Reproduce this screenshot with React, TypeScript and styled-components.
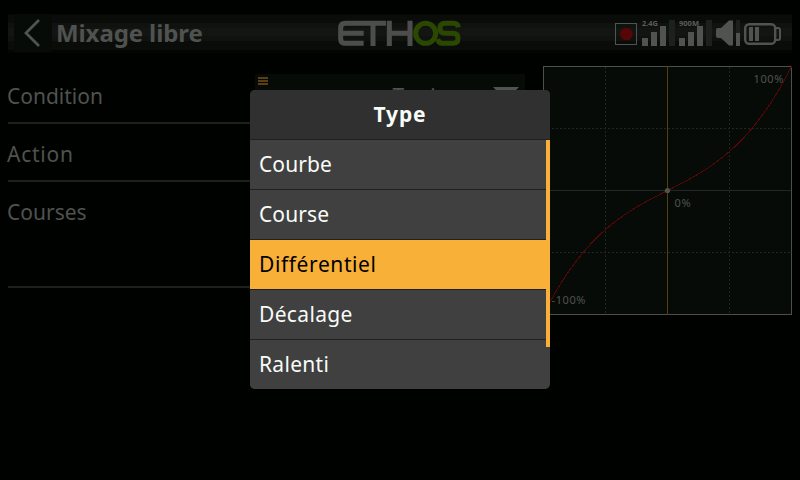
import React from "react";
import styled, { createGlobalStyle } from "styled-components";

const Global = createGlobalStyle`
  * { box-sizing: border-box; }
  html, body { margin: 0; background: #000200; }
  body { width: 800px; height: 480px; overflow: hidden; }
`;

const Screen = styled.main`
  position: relative;
  width: 800px;
  height: 480px;
  padding: 14px 8px 0;
  background: #000200;
  color: #4f524f;
  font: 21px/30px "Noto Sans", "Open Sans", sans-serif;
`;

const Header = styled.header`
  display: grid;
  grid-template-columns: 330px 124px 1fr;
  height: 39px;
  background: linear-gradient(#050705 0 1px, #0a0c0a 1px 9px, #101210 9px 14px, #131513 14px 22px, #101210 22px 27px, #0a0c0a 27px 36px, #030503 36px);
`;

const TitleGroup = styled.div`
  display: flex;
  align-items: center;
  padding-left: 6px;
`;

const BackButton = styled.button`
  width: 38px;
  height: 38px;
  margin-top: -1px;
  padding: 0;
  border: 0;
  background: #070b08;
`;

const Title = styled.h1`
  margin: -2px 0 0 4px;
  font-size: 24px;
  line-height: 38px;
  font-weight: 700;
  letter-spacing: -0.1px;
  white-space: nowrap;
`;

const Status = styled.div`
  display: flex;
  align-items: flex-start;
  justify-content: flex-end;
  padding: 6px 10px 0 0;
`;

const Icon = styled.svg<{ $left?: number; $top?: number }>`
  display: block;
  flex: none;
  overflow: visible;
  margin-left: ${(p) => p.$left ?? 0}px;
  margin-top: ${(p) => p.$top ?? 0}px;
`;

const SignalLabel = styled.text`
  font: 700 7.5px "Noto Sans", sans-serif;
  fill: #5a5e5a;
`;

const Content = styled.div`
  display: grid;
  grid-template-columns: 517px 249px;
  column-gap: 18px;
  padding-top: 13px;
`;

const Form = styled.div`
  display: flex;
  flex-direction: column;
`;

const Row = styled.div<{ $h: number }>`
  display: grid;
  grid-template-columns: 247px 270px;
  height: ${(p) => p.$h}px;
  border-bottom: 2px solid #1d211e;
`;

const Label = styled.span<{ $ls: number }>`
  padding-top: 15px;
  margin-left: -1px;
  letter-spacing: ${(p) => p.$ls}px;
`;

const Select = styled.div`
  display: grid;
  grid-template-columns: 14px 1fr 34px;
  align-items: start;
  height: 43px;
  margin-top: 8px;
  padding: 3px 3px 0;
  background: #070b08;
`;

const SelectValue = styled.span`
  padding-top: 4px;
  text-align: right;
  letter-spacing: 0.6px;
  padding-right: 5px;
`;

const ChartText = styled.text`
  font: 11px "Noto Sans", sans-serif;
  letter-spacing: 0.6px;
  fill: #4f524f;
`;

const Dialog = styled.section`
  position: absolute;
  left: 250px;
  top: 90px;
  width: 300px;
  height: 299px;
  border-radius: 5px;
  overflow: hidden;
  background: #404040;
`;

const DialogTitle = styled.h2`
  height: 50px;
  margin: 0;
  border-bottom: 1px solid #1f2120;
  background: #303030;
  color: #f8fcf8;
  font-size: 21px;
  line-height: 49px;
  font-weight: 700;
  letter-spacing: 0.9px;
  text-align: center;
`;

const List = styled.div`
  display: grid;
  grid-template-columns: 296px 4px;
`;

const Option = styled.div<{ $active?: boolean; $ls: number }>`
  height: 50px;
  padding-left: 9px;
  line-height: 49px;
  letter-spacing: ${(p) => p.$ls}px;
  border-bottom: 1px solid #1f2120;
  background: ${(p) => (p.$active ? "#f8b038" : "#404040")};
  color: ${(p) => (p.$active ? "#000200" : "#f8fcf8")};

  &:last-child { border-bottom-color: #404040; }
`;

const ScrollThumb = styled.div`
  height: 207px;
  background: #f8b038;
`;

const DIM = "#505450";
const FAINT = "#1d211e";

function Signal({ label, left, width }: { label: string; left: number; width: number }) {
  return (
    <Icon $left={left} width="33" height="26" viewBox="0 0 33 26" shapeRendering="crispEdges">
      <path d="M0 18h6v8H0zM9 12h6v14H9zM18 6h6v20h-6z" fill={DIM} />
      <path d="M27 0h6v26h-6z" fill={FAINT} />
      <SignalLabel x="0" y="6" textLength={width} lengthAdjust="spacingAndGlyphs">{label}</SignalLabel>
    </Icon>
  );
}

function Logo() {
  return (
    <Icon $top={6} width="124" height="27" viewBox="54 45 372 81" fill="none" strokeWidth="15" stroke="#4d4d4d">
      <path d="M131 55H76Q62 55 62 69V101Q62 115 76 115H131M64 85H131M128 55H198M159 55V123M208 47V123M270 47V123M208 85H270" />
      <g stroke="#2b4800">
        <circle cx="317" cy="85" r="30" />
        <path d="M415 67Q413 55 401 55H375Q360 55 360 70Q360 85 375 85H399Q414 85 414 100Q414 115 399 115H368Q355 115 353 102" />
      </g>
    </Icon>
  );
}

function StatusIcons() {
  return (
    <Status>
      <Icon $top={3} width="22" height="22" viewBox="0 0 22 22">
        <rect x=".5" y=".5" width="21" height="21" fill="none" stroke={DIM} />
        <circle cx="11.4" cy="11" r="6.3" fill="#560606" />
      </Icon>
      <Signal left={5} label="2.4G" width={16} />
      <Signal left={4} label="900M" width={20} />
      <Icon $left={4} width="25" height="26" viewBox="0 0 25 26">
        <path d="M0 10Q0 8 2 8H5L13 .5H17V25.500H13L5 18H2Q0 18 0 16z" fill={DIM} />
        <path d="M20 0h4v13h-4z" fill={FAINT} />
        <path d="M20 13h4v13h-4z" fill={DIM} />
      </Icon>
      <Icon $left={3} $top={3} width="38" height="22" viewBox="0 0 38 22">
        <rect x="1.200" y="1.200" width="30" height="19.600" rx="4" fill="none" stroke={DIM} strokeWidth="2.400" />
        <path d="M32 5H34Q36 5 36 7V15Q36 17 34 17H32" fill="none" stroke={DIM} strokeWidth="2" />
        <path d="M5 4h4v14H5zM11 4h4v14h-4z" fill={DIM} />
      </Icon>
    </Status>
  );
}

const curve = Array.from({ length: 125 }, (_, i) => {
  const x = (i - 62) / 62;
  const y = 0.507 * x + 0.493 * x ** 3;
  return `${(124.5 + x * 124).toFixed(2)},${(124.5 - y * 124).toFixed(2)}`;
}).join(" ");

function Chart() {
  return (
    <Icon width="249" height="249" viewBox="0 0 249 249">
      <rect x=".5" y=".5" width="248" height="248" fill="#070b08" stroke="#4c504c" />
      <path d="M62.500 1V248M186.500 1V248M1 62.500H248M1 186.500H248" stroke="#222622" strokeDasharray="2 2" />
      <path d="M1 124.500H248" stroke="#242824" />
      <path d="M124.500 0V249" stroke="#573c10" />
      <polyline points={curve} fill="none" stroke="#560606" shapeRendering="crispEdges" />
      <circle cx="124.500" cy="124.500" r="2.600" fill="#505450" />
      <ChartText x="210.500" y="17">100%</ChartText>
      <ChartText x="131.500" y="141">0%</ChartText>
      <ChartText x="8.500" y="238">-100%</ChartText>
    </Icon>
  );
}

const options = [
  { name: "Courbe", ls: 0.1 },
  { name: "Course", ls: 0.1 },
  { name: "Différentiel", ls: 0.6, active: true },
  { name: "Décalage", ls: 0.35 },
  { name: "Ralenti", ls: 0.3 },
];

export default function App() {
  return (
    <>
      <Global />
      <Screen>
        <Header>
          <TitleGroup>
            <BackButton aria-label="Retour">
              <Icon width="38" height="38" viewBox="0 0 38 38">
                <path d="M25 6L12 19L25 32" fill="none" stroke={DIM} strokeWidth="2.800" />
              </Icon>
            </BackButton>
            <Title>Mixage libre</Title>
          </TitleGroup>
          <Logo />
          <StatusIcons />
        </Header>
        <Content>
          <Form>
            <Row $h={58}>
              <Label $ls={0}>Condition</Label>
              <Select>
                <Icon width="10" height="8" viewBox="0 0 10 8">
                  <path d="M0 0h10v2H0zM0 3h10v2H0zM0 6h10v2H0z" fill="#5b3e12" />
                </Icon>
                <SelectValue>Toujours</SelectValue>
                <Icon $left={5} $top={10} width="26" height="14" viewBox="0 0 26 14">
                  <path d="M0 0h26L13 14z" fill={DIM} />
                </Icon>
              </Select>
            </Row>
            <Row $h={58}><Label $ls={0.75}>Action</Label></Row>
            <Row $h={106}><Label $ls={0}>Courses</Label></Row>
          </Form>
          <Chart />
        </Content>
        <Dialog role="dialog">
          <DialogTitle>Type</DialogTitle>
          <List>
            <div>
              {options.map((o) => (
                <Option key={o.name} $active={o.active} $ls={o.ls}>{o.name}</Option>
              ))}
            </div>
            <ScrollThumb />
          </List>
        </Dialog>
      </Screen>
    </>
  );
}
